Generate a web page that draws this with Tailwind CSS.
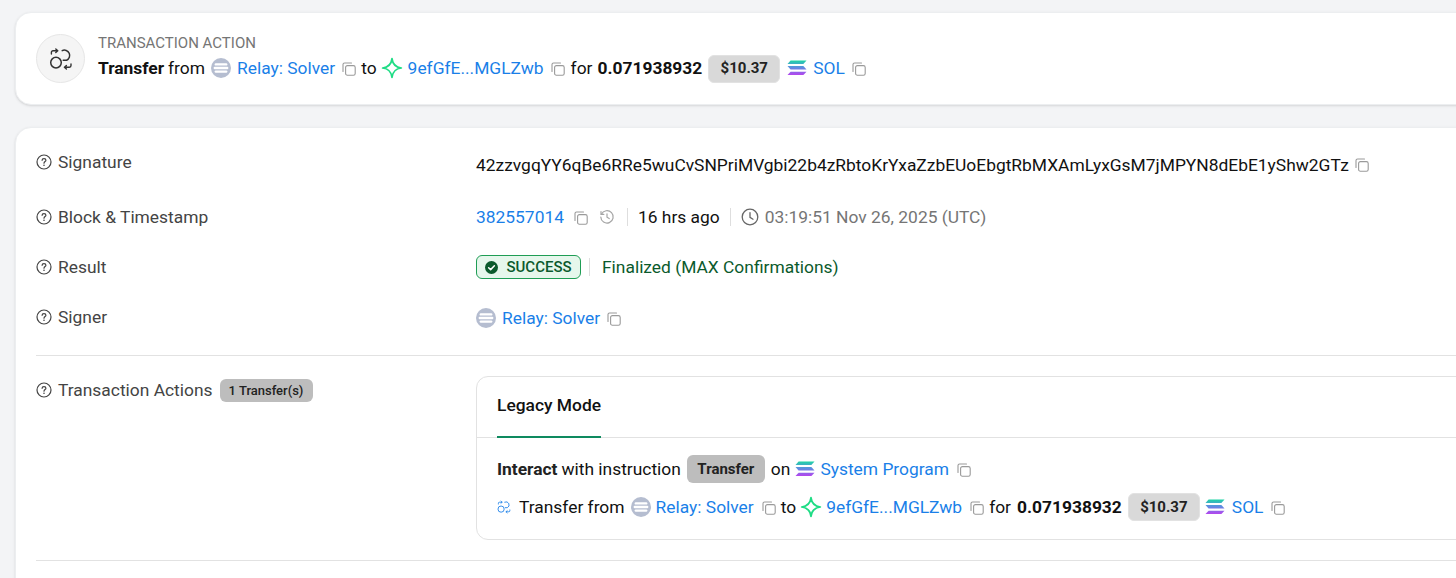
<!DOCTYPE html>
<html lang="en">
 <head>
  <meta charset="UTF-8"/>
  <title>Transaction Details</title>
  <script src="https://cdn.jsdelivr.net/npm/@tailwindcss/browser@4"></script>
 </head>
 <body class="bg-[#f3f4f6] h-[578px] w-[1456px] overflow-hidden font-['Roboto',sans-serif] text-[17.4px] text-[#111111]">
  <!-- Shared icons -->
  <svg class="absolute w-0 h-0">
   <defs>
    <linearGradient id="solGrad" gradientUnits="userSpaceOnUse" x1="0" y1="0" x2="0" y2="16">
     <stop offset="0" stop-color="#1ad9a0"/>
     <stop offset="0.45" stop-color="#5b8ee0"/>
     <stop offset="1" stop-color="#c03bf0"/>
    </linearGradient>
   </defs>
   <symbol id="copy" viewBox="0 0 14 14">
    <path d="M1 9.5V2.6C1 1.7 1.7 1 2.6 1H9.5" fill="none" stroke="currentColor" stroke-width="1.1" stroke-linecap="round"/>
    <rect x="3.6" y="3.6" width="9.6" height="9.6" rx="1.8" fill="none" stroke="currentColor" stroke-width="1.1"/>
   </symbol>
   <symbol id="relay" viewBox="0 0 20 20">
    <circle cx="10" cy="10" r="10" fill="#b5bdd0"/>
    <rect x="3.6" y="5.2" width="12.8" height="2.4" rx="1.2" fill="#fff"/>
    <rect x="2.6" y="8.8" width="14.8" height="2.4" rx="1.2" fill="#fff"/>
    <rect x="3.6" y="12.4" width="12.8" height="2.4" rx="1.2" fill="#fff"/>
   </symbol>
   <symbol id="star" viewBox="0 0 20 20">
    <path d="M10 1.5C10.6 6.6 13.4 9.4 18.5 10C13.4 10.6 10.6 13.4 10 18.5C9.4 13.4 6.6 10.6 1.5 10C6.6 9.4 9.4 6.6 10 1.5Z" fill="none" stroke="#1fdc85" stroke-width="1.6" stroke-linejoin="round"/>
   </symbol>
   <symbol id="sol" viewBox="0 0 20 16">
    <path d="M3.6 0.5H19.5L16.4 3.9H0.5Z" fill="url(#solGrad)"/>
    <path d="M0.5 6.1H16.4L19.5 9.5H3.6Z" fill="url(#solGrad)"/>
    <path d="M3.6 11.7H19.5L16.4 15.1H0.5Z" fill="url(#solGrad)"/>
   </symbol>
   <symbol id="help" viewBox="0 0 16 16">
    <circle cx="8" cy="8" r="7" fill="none" stroke="#444" stroke-width="1.2"/>
    <path d="M6.1 6.3C6.1 5.2 7 4.6 8 4.6C9.1 4.6 9.9 5.3 9.9 6.2C9.9 7.5 8 7.6 8 9.2" fill="none" stroke="#444" stroke-width="1.2" stroke-linecap="round"/>
    <circle cx="8" cy="11.3" r="0.8" fill="#444"/>
   </symbol>
   <symbol id="swap" viewBox="0 0 24 24">
    <circle cx="7" cy="15.6" r="5.3" fill="none" stroke="currentColor" stroke-width="1.5"/>
    <path d="M13.2 3.6A5.2 5.2 0 1 1 17.6 13.2H14.2" fill="none" stroke="currentColor" stroke-width="1.5" stroke-linecap="round"/>
    <path d="M2.4 7V5.4C2.4 4.4 3 3.8 4 3.8H8.6M6.8 2L8.8 3.8L6.8 5.6" fill="none" stroke="currentColor" stroke-width="1.4" stroke-linecap="round" stroke-linejoin="round"/>
    <path d="M22 17V18.6C22 19.6 21.4 20.2 20.4 20.2H15.6M17.4 18.4L15.4 20.2L17.4 22" fill="none" stroke="currentColor" stroke-width="1.4" stroke-linecap="round" stroke-linejoin="round"/>
   </symbol>
  </svg>

  <main class="w-[1456px] h-[578px] overflow-hidden pl-[15px] pt-3">
   <!-- Transaction action card -->
   <section class="w-[1500px] h-[93px] bg-white rounded-2xl border border-[#eceef0] shadow-sm flex items-center pl-5 gap-[13px]">
    <div class="w-[49px] h-[49px] rounded-full bg-[#f5f5f5] border border-[#e6e6e6] flex items-center justify-center text-[#333]">
     <svg class="w-6 h-6"><use href="#swap"/></svg>
    </div>
    <div class="flex flex-col">
     <div class="text-[15px] leading-5 text-[#757575] uppercase">Transaction Action</div>
     <div class="flex items-center h-8 -mt-px">
      <b class="font-bold">Transfer</b>
      <span class="ml-1">from</span>
      <svg class="w-5 h-5 ml-[6px]"><use href="#relay"/></svg>
      <a class="ml-1.5 text-[#1a7fe8]">Relay: Solver</a>
      <svg class="w-3.5 h-3.5 ml-[7px] mt-0.5 text-[#9a9a9a]"><use href="#copy"/></svg>
      <span class="ml-[5px]">to</span>
      <svg class="w-[22px] h-[22px] ml-1"><use href="#star"/></svg>
      <a class="ml-[5px] text-[#1a7fe8]">9efGfE...MGLZwb</a>
      <svg class="w-3.5 h-3.5 ml-[7px] mt-0.5 text-[#9a9a9a]"><use href="#copy"/></svg>
      <span class="ml-[6px]">for</span>
      <b class="ml-[5px] font-bold">0.071938932</b>
      <span class="ml-[6px] mt-px h-[28px] w-[72px] rounded-md bg-[#d9d9d9] border border-[#e2e2e2] text-[15px] font-bold flex items-center justify-center text-[#222]">$10.37</span>
      <svg class="w-5 h-4 ml-[7px]"><use href="#sol"/></svg>
      <a class="ml-1.5 text-[#1a7fe8]">SOL</a>
      <svg class="w-3.5 h-3.5 ml-[7px] mt-0.5 text-[#9a9a9a]"><use href="#copy"/></svg>
     </div>
    </div>
   </section>

   <!-- Details card -->
   <section class="w-[1500px] mt-[22px] h-[500px] bg-white rounded-2xl border border-[#eceef0] shadow-sm px-5">
    <div class="grid grid-cols-[440px_1fr] h-[24px] mt-[20px] items-center">
     <div class="flex items-center gap-[6px] text-[#444] -mt-[2px]"><svg class="w-4 h-4"><use href="#help"/></svg>Signature</div>
     <div class="flex items-center text-[#111] mt-1">42zzvgqYY6qBe6RRe5wuCvSNPriMVgbi22b4zRbtoKrYxaZzbEUoEbgtRbMXAmLyxGsM7jMPYN8dEbE1yShw2GTz<svg class="w-3.5 h-3.5 ml-[6px] text-[#9a9a9a]"><use href="#copy"/></svg></div>
    </div>

    <div class="grid grid-cols-[440px_1fr] h-[24px] mt-[32px] items-center">
     <div class="flex items-center gap-[6px] text-[#444]"><svg class="w-4 h-4"><use href="#help"/></svg>Block &amp; Timestamp</div>
     <div class="flex items-center">
      <a class="text-[#1a7fe8]">382557014</a>
      <svg class="w-3.5 h-3.5 ml-[10px] mt-0.5 text-[#9a9a9a]"><use href="#copy"/></svg>
      <svg class="w-4 h-4 ml-[11px] text-[#a5a5a5]" viewBox="0 0 16 16" fill="none" stroke="currentColor" stroke-width="1.2" stroke-linecap="round"><path d="M2.4 5.2A6.2 6.2 0 1 1 1.8 8"/><path d="M2 2.6V5.4H4.8"/><path d="M8 4.8V8.2L10.2 9.6"/></svg>
      <span class="ml-3 mr-[10px] w-px h-[18px] bg-[#dedede]"></span>
      <span>16 hrs ago</span>
      <span class="mx-[10px] w-px h-[18px] bg-[#dedede]"></span>
      <svg class="w-[18px] h-[18px] text-[#666]" viewBox="0 0 18 18" fill="none" stroke="currentColor" stroke-width="1.3" stroke-linecap="round"><circle cx="9" cy="9" r="7.8"/><path d="M9 4.6V9.4L12 11.2"/></svg>
      <span class="ml-[6px] text-[#757575]">03:19:51 Nov 26, 2025 (UTC)</span>
     </div>
    </div>

    <div class="grid grid-cols-[440px_1fr] h-[24px] mt-[26px] items-center">
     <div class="flex items-center gap-[6px] text-[#444]"><svg class="w-4 h-4"><use href="#help"/></svg>Result</div>
     <div class="flex items-center text-[#0b5a2c]">
      <span class="h-6 w-[105px] rounded-md border border-[#1f9d55] bg-[#e6f7ec] text-[15px] font-medium flex items-center justify-center gap-2">
       <svg class="w-[13px] h-[13px]" viewBox="0 0 14 14"><circle cx="7" cy="7" r="7" fill="#0b5a2c"/><path d="M3.9 7.2L6.1 9.3L10.1 5.1" fill="none" stroke="#fff" stroke-width="1.6" stroke-linecap="round" stroke-linejoin="round"/></svg>
       SUCCESS
      </span>
      <span class="ml-2 mr-3 w-px h-[18px] bg-[#dedede]"></span>
      <span>Finalized (MAX Confirmations)</span>
     </div>
    </div>

    <div class="grid grid-cols-[440px_1fr] h-[24px] mt-[26px] items-center">
     <div class="flex items-center gap-[6px] text-[#444] -mt-[2px]"><svg class="w-4 h-4"><use href="#help"/></svg>Signer</div>
     <div class="flex items-center mt-px">
      <svg class="w-5 h-5"><use href="#relay"/></svg>
      <a class="ml-1.5 text-[#1a7fe8]">Relay: Solver</a>
      <svg class="w-3.5 h-3.5 ml-[7px] mt-0.5 text-[#9a9a9a]"><use href="#copy"/></svg>
     </div>
    </div>

    <div class="mt-[27px] border-t border-[#e2e2e2]"></div>

    <div class="grid grid-cols-[440px_1fr] mt-5">
     <div class="flex items-center gap-[6px] text-[#444] h-6 mt-[2px]">
      <svg class="w-4 h-4"><use href="#help"/></svg>Transaction Actions
      <span class="ml-px mt-px h-[23px] w-[93px] rounded-md bg-[#bdbdbd] text-[13px] font-medium text-[#222] flex items-center justify-center">1 Transfer(s)</span>
     </div>
     <div class="h-[164px] rounded-xl border border-[#e2e2e2]">
      <div class="h-[61px] border-b border-[#e2e2e2] px-5">
       <div class="h-[61px] w-fit pb-[2px] flex items-center font-medium border-b-2 border-[#0e8a5f] text-[#111]">Legacy Mode</div>
      </div>
      <div class="px-5">
       <div class="flex items-center h-7 mt-[17px]">
        <b class="font-bold text-[#222]">Interact</b>
        <span class="ml-1">with instruction</span>
        <span class="ml-[6px] h-[28px] w-[78px] rounded-md bg-[#bdbdbd] text-[15px] font-bold flex items-center justify-center text-[#222]">Transfer</span>
        <span class="ml-[6px]">on</span>
        <svg class="w-5 h-4 ml-[5px]"><use href="#sol"/></svg>
        <a class="ml-[5px] text-[#1a7fe8]">System Program</a>
        <svg class="w-3.5 h-3.5 ml-2 mt-0.5 text-[#9a9a9a]"><use href="#copy"/></svg>
       </div>
       <div class="flex items-center h-7 mt-[10px]">
        <svg class="w-[14px] h-[14px] text-[#1a7fe8]"><use href="#swap"/></svg>
        <span class="ml-[8px]">Transfer from</span>
        <svg class="w-5 h-5 ml-[6px]"><use href="#relay"/></svg>
        <a class="ml-[5px] text-[#1a7fe8]">Relay: Solver</a>
        <svg class="w-3.5 h-3.5 ml-2 mt-0.5 text-[#9a9a9a]"><use href="#copy"/></svg>
        <span class="ml-[5px]">to</span>
        <svg class="w-[22px] h-[22px] ml-1"><use href="#star"/></svg>
        <a class="ml-1 text-[#1a7fe8]">9efGfE...MGLZwb</a>
        <svg class="w-3.5 h-3.5 ml-2 mt-0.5 text-[#9a9a9a]"><use href="#copy"/></svg>
        <span class="ml-[5px]">for</span>
        <b class="ml-[6px] font-bold">0.071938932</b>
        <span class="ml-[6px] h-[28px] w-[72px] rounded-md bg-[#d9d9d9] border border-[#e2e2e2] text-[15px] font-bold flex items-center justify-center text-[#222]">$10.37</span>
        <svg class="w-5 h-4 ml-[5px]"><use href="#sol"/></svg>
        <a class="ml-[7px] text-[#1a7fe8]">SOL</a>
        <svg class="w-3.5 h-3.5 ml-[7px] mt-0.5 text-[#9a9a9a]"><use href="#copy"/></svg>
       </div>
      </div>
     </div>
    </div>

    <div class="mt-5 border-t border-[#e2e2e2]"></div>
   </section>
  </main>
 </body>
</html>
